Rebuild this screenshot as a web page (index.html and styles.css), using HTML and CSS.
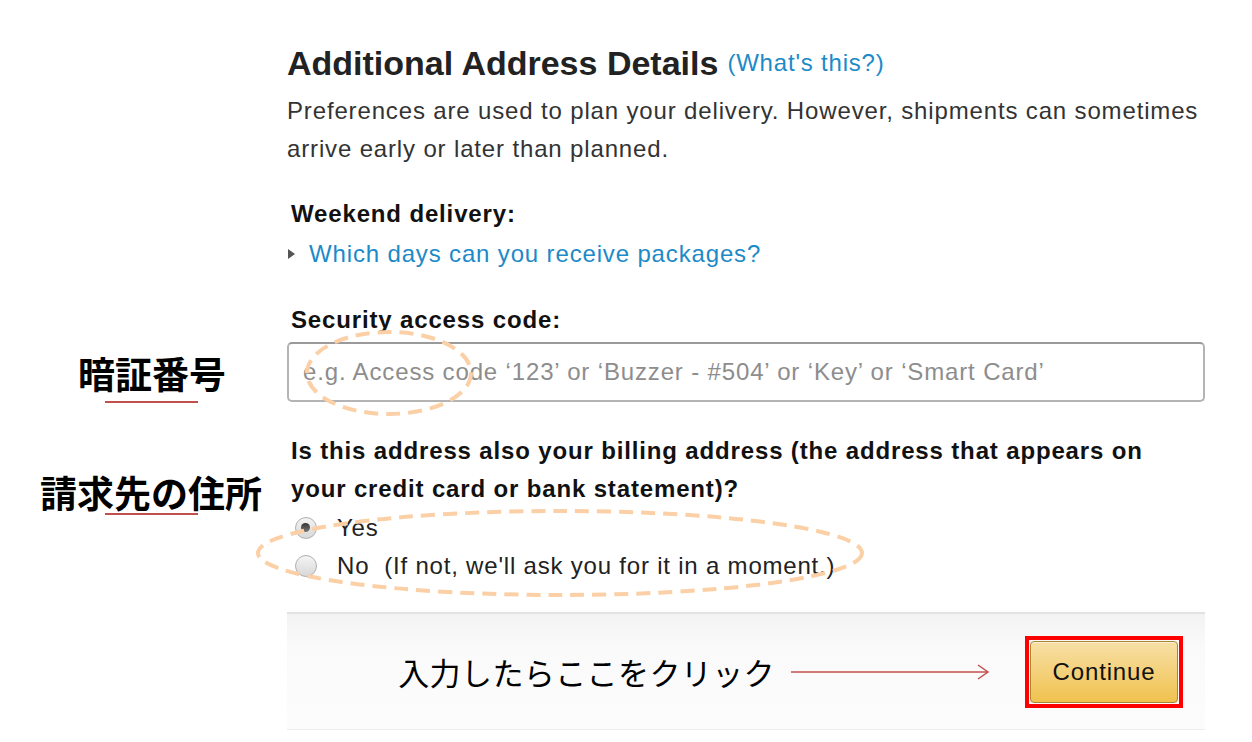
FILE: index.html
```html
<!DOCTYPE html>
<html lang="ja">
<head>
<meta charset="utf-8">
<title>Additional Address Details</title>
<link rel="stylesheet" href="styles.css">
</head>
<body>
<div class="page">
  <div class="form">
    <h1 class="title"><span>Additional Address Details</span><a class="help">(What's this?)</a></h1>
    <p class="intro">Preferences are used to plan your delivery. However, shipments can sometimes<br>arrive early or later than planned.</p>

    <div class="label weekend">Weekend delivery:</div>
    <div class="expander"><span class="tri"></span><a class="link">Which days can you receive packages?</a></div>

    <div class="label security">Security access code:</div>
    <input class="field" type="text" placeholder="e.g. Access code ‘123’ or ‘Buzzer - #504’ or ‘Key’ or ‘Smart Card’">

    <div class="label question">Is this address also your billing address (the address that appears on<br>your credit card or bank statement)?</div>
    <div class="radios">
      <div class="radio"><span class="dot checked"></span><span>Yes</span></div>
      <div class="radio"><span class="dot"></span><span>No&nbsp; (If not, we'll ask you for it in a moment.)</span></div>
    </div>

    <div class="footer">
      <span class="hint">入力したらここをクリック</span>
      <svg class="arrow" width="200" height="16" viewBox="0 0 200 16">
        <line x1="0" y1="8" x2="197" y2="8" stroke="#c0504d" stroke-width="1.5"/>
        <polyline points="187,1 197,8 187,15" fill="none" stroke="#c0504d" stroke-width="1.5"/>
      </svg>
      <span class="highlight"><span class="continue">Continue</span></span>
    </div>
  </div>

  <div class="note note-code">暗証番号</div>
  <div class="note note-billing">請求先の住所</div>

  <svg class="marks" width="1252" height="742" viewBox="0 0 1252 742">
    <ellipse cx="389" cy="373" rx="82" ry="41" fill="none" stroke="#fbd0a6" stroke-width="4" stroke-dasharray="14 8"/>
    <ellipse cx="560" cy="553" rx="302" ry="42" fill="none" stroke="#fbd0a6" stroke-width="4" stroke-dasharray="14 8"/>
  </svg>
</div>
</body>
</html>
```

FILE: styles.css
```css
* { box-sizing: border-box; }
html, body { margin: 0; padding: 0; background: #fff; }
body {
  font-family: "Liberation Sans", Arial, "Noto Sans CJK JP", sans-serif;
  color: #111;
}
.page {
  position: relative;
  width: 1252px;
  height: 742px;
  overflow: hidden;
}
.form {
  margin-left: 287px;
  width: 918px;
  padding-top: 45px;
  display: flex;
  flex-direction: column;
}
.title {
  margin: 0;
  display: flex;
  align-items: center;
  gap: 9px;
  height: 36px;
  font-size: 34px;
  line-height: 36px;
  font-weight: bold;
  color: #222;
  white-space: nowrap;
}
.help {
  font-size: 24px;
  letter-spacing: 0.8px;
  font-weight: normal;
  color: #1d8ac8;
}
.intro {
  margin: 11px 0 0;
  font-size: 24px;
  letter-spacing: 0.85px;
  line-height: 38px;
  color: #333;
  white-space: nowrap;
}
.label {
  font-weight: bold;
  font-size: 24px;
  letter-spacing: 0.85px;
  line-height: 30px;
  color: #111;
  padding-left: 4px;
  white-space: nowrap;
}
.weekend { margin-top: 31px; }
.expander {
  display: flex;
  align-items: center;
  height: 30px;
  margin-top: 10px;
}
.tri {
  width: 0;
  height: 0;
  border-top: 5.5px solid transparent;
  border-bottom: 5.5px solid transparent;
  border-left: 7px solid #555;
  margin-left: 1px;
  margin-right: 14px;
}
.link {
  font-size: 24px;
  letter-spacing: 0.85px;
  color: #1d8ac8;
}
.security { margin-top: 36px; }
.field {
  margin-top: 7px;
  width: 918px;
  height: 60px;
  border: 2px solid #b4b4b4;
  border-top-color: #9a9a9a;
  border-radius: 5px;
  padding: 0 14px;
  font-family: "Liberation Sans", Arial, sans-serif;
  font-size: 24px;
  letter-spacing: 0.85px;
  color: #111;
  background: #fff;
}
.field::placeholder { color: #8d8d8d; }
.question {
  margin-top: 30px;
  line-height: 38px;
}
.radios {
  display: flex;
  flex-direction: column;
  margin-top: 1px;
}
.radio {
  display: flex;
  align-items: center;
  height: 38px;
  font-size: 24px;
  letter-spacing: 0.8px;
  color: #222;
}
.dot {
  position: relative;
  width: 22px;
  height: 22px;
  border-radius: 50%;
  border: 1.5px solid #b0b0b0;
  background: linear-gradient(#f4f4f4, #d8d8d8);
  margin-left: 8px;
  margin-right: 20px;
}
.dot.checked::after {
  content: "";
  position: absolute;
  left: 5px;
  top: 5px;
  width: 9px;
  height: 9px;
  border-radius: 50%;
  background: linear-gradient(#333, #777);
}
.footer {
  margin-top: 27px;
  height: 118px;
  display: flex;
  align-items: center;
  justify-content: flex-end;
  padding-right: 22px;
  background: linear-gradient(#f3f3f3, #fafafa 30%, #fcfcfc);
  border-top: 2px solid #e2e2e2;
  border-bottom: 1px solid #eeeeee;
}
.hint {
  font-family: "Noto Sans CJK JP", sans-serif;
  font-size: 31px;
  font-weight: 400;
  color: #000;
  letter-spacing: 0.4px;
}
.arrow {
  margin-left: 16px;
  margin-right: 34px;
}
.highlight {
  display: block;
  border: 4px solid #f00;
  padding: 1px;
}
.continue {
  display: flex;
  align-items: center;
  justify-content: center;
  width: 148px;
  height: 62px;
  border: 1px solid #a88734;
  border-radius: 4px;
  background: linear-gradient(#f7e0a6, #f0c24e);
  box-shadow: inset 0 1px 0 rgba(255,255,255,0.5);
  font-size: 24px;
  letter-spacing: 0.85px;
  color: #111;
}
.note {
  position: absolute;
  font-family: "Noto Sans CJK JP", sans-serif;
  font-weight: 700;
  font-size: 37px;
  line-height: 44px;
  color: #000;
}
.note::after {
  content: "";
  position: absolute;
  left: 0;
  width: 93px;
  height: 2px;
  background: #c0504d;
}
.note-code { left: 78px; top: 351px; }
.note-code::after { left: 27px; top: 50px; }
.note-billing { left: 40px; top: 470px; }
.note-billing::after { left: 65px; top: 43px; }
.marks {
  position: absolute;
  left: 0;
  top: 0;
  pointer-events: none;
}
```
